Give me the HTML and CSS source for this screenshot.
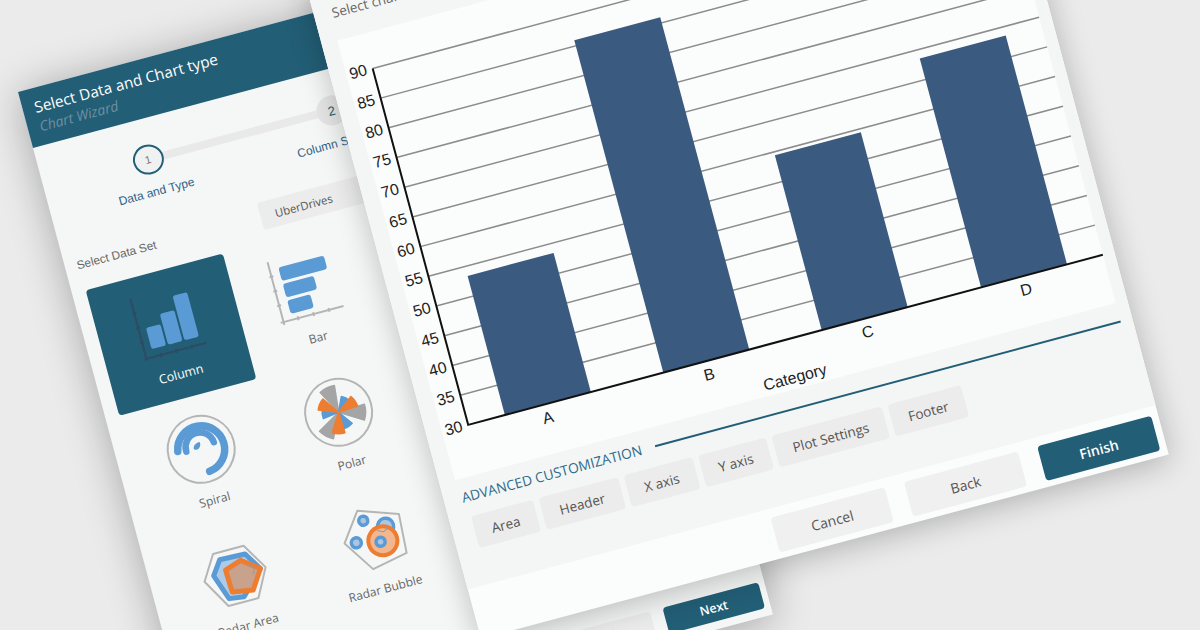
FILE: index.html
```html
<!DOCTYPE html>
<html lang="en">
<head>
<meta charset="utf-8">
<title>Chart Wizard</title>
<link rel="stylesheet" href="styles.css">
</head>
<body>
<main class="stage">

  <section class="window wizard">
    <header class="wizard-head">
      <h1 class="wizard-title">Select Data and Chart type</h1>
      <p class="wizard-sub">Chart Wizard</p>
    </header>

    <div class="stepper">
      <div class="step step-active">
        <span class="step-dot">1</span>
        <span class="step-label">Data and Type</span>
      </div>
      <div class="step">
        <span class="step-dot">2</span>
        <span class="step-label">Column Settings</span>
      </div>
    </div>

    <div class="form-row">
      <span class="form-label">Select Data Set</span>
      <div class="select">UberDrives</div>
    </div>

    <div class="type-grid">
      <div class="type-card type-selected">
        <svg class="type-icon" viewBox="0 0 142 95">
          <g class="axis-dark">
            <path d="M41 20V84M39 82H103M39 35h4M39 50h4M39 65h4M56 80v4M72 80v4M88 80v4"/>
          </g>
          <g class="fill-blue">
            <rect x="48.500" y="52" width="15" height="22" rx="2.5"/>
            <rect x="65.500" y="42" width="15" height="32" rx="2.5"/>
            <rect x="82.500" y="28" width="15" height="46" rx="2.5"/>
          </g>
        </svg>
        <span class="type-name">Column</span>
      </div>

      <div class="type-card">
        <svg class="type-icon" viewBox="0 0 142 95">
          <g class="axis-grey">
            <path d="M41 20V85M38 82H103M39 35h4M39 50h4M39 65h4M56 80v4M72 80v4M88 80v4"/>
          </g>
          <g class="fill-blue">
            <rect x="50" y="28" width="47" height="14" rx="3"/>
            <rect x="50" y="45" width="32" height="14" rx="3"/>
            <rect x="50" y="62" width="24" height="14" rx="3"/>
          </g>
        </svg>
        <span class="type-name">Bar</span>
      </div>

      <div class="type-card">
        <svg class="type-icon" viewBox="0 0 142 95">
          <circle class="ring" cx="70.5" cy="53.5" r="33.5"/>
          <g class="spiral">
            <path class="spiral-outer" d="M73 77A23.500 23.500 0 1 0 47.300 49.500"/>
            <path class="spiral-inner" d="M55.500 52A14.500 14.500 0 0 1 84.500 50"/>
          </g>
          <path class="fill-blue" d="M63.500 52C63 48 67 45.500 71 46C71.500 50.500 68 54 63.500 52Z"/>
        </svg>
        <span class="type-name">Spiral</span>
      </div>

      <div class="type-card">
        <svg class="type-icon" viewBox="0 0 142 95">
          <circle class="ring" cx="70.8" cy="53.3" r="33.5"/>
          <g transform="translate(70.8 53.3)">
            <g class="petal-grey">
              <path transform="rotate(-101)" d="M0 0L25.800 -7.900A27 27 0 0 1 25.800 7.900Z"/>
              <path transform="rotate(15)" d="M0 0L25.800 -7.900A27 27 0 0 1 25.800 7.900Z"/>
              <path transform="rotate(133)" d="M0 0L25.800 -7.900A27 27 0 0 1 25.800 7.900Z"/>
            </g>
            <g class="petal-blue">
              <path transform="rotate(-48)" d="M0 0L15.300 -4.700A16 16 0 0 1 15.300 4.700Z"/>
              <path transform="rotate(-171)" d="M0 0L15.800 -4.800A16.500 16.500 0 0 1 15.800 4.800Z"/>
              <path transform="rotate(71)" d="M0 0L16.700 -5.100A17.500 17.500 0 0 1 16.700 5.100Z"/>
            </g>
            <g class="petal-orange">
              <path transform="rotate(-20)" d="M0 0L19.100 -5.800A20 20 0 0 1 19.100 5.800Z"/>
              <path transform="rotate(-142)" d="M0 0L19.600 -6A20.500 20.500 0 0 1 19.600 6Z"/>
              <path transform="rotate(105)" d="M0 0L20.600 -6.300A21.500 21.500 0 0 1 20.600 6.300Z"/>
            </g>
          </g>
        </svg>
        <span class="type-name">Polar</span>
      </div>

      <div class="type-card">
        <svg class="type-icon" viewBox="0 0 142 95">
          <g transform="translate(70.8 55)">
            <path class="outline" d="M-16 -27.3H15.700L31.400 -1L16.500 27H-14.500L-31.400 -2.600Z"/>
            <path class="radar-blue" d="M-11 -20L15 -19L26 -1L3 22L-12 20L-21 -6Z"/>
            <path class="radar-orange" d="M9 -14L26 -1L13.400 18L-7.300 14.300L-8 -8.400Z"/>
            <path class="web" d="M15 -8L20 -3L18 3"/>
          </g>
        </svg>
        <span class="type-name">Radar Area</span>
      </div>

      <div class="type-card">
        <svg class="type-icon" viewBox="0 0 142 95">
          <g transform="translate(73.4 56.4)">
            <path class="outline" d="M-10.100 -33.100L29.300 -19.100L26.700 20.300L-9.800 27.400L-30.800 -4.800Z"/>
            <circle class="bubble" cx="-6.900" cy="-21.900" r="4.500"/>
            <circle class="bubble" cx="-19.300" cy="-2.400" r="5"/>
            <circle class="bubble" cx="13.300" cy="-10.900" r="8"/>
            <circle class="bubble-big" cx="6.900" cy="2.500" r="14.500"/>
            <circle class="bubble" cx="4.400" cy="2.900" r="4.500"/>
            <path class="web" d="M4 -9L10 -6L15 -9"/>
          </g>
        </svg>
        <span class="type-name">Radar Bubble</span>
      </div>
    </div>

    <footer class="wizard-foot">
      <button class="btn-small">Back</button>
      <button class="btn-small btn-small-primary">Next</button>
    </footer>
  </section>

  <section class="window editor">
    <div class="editor-main">
      <p class="editor-label">Select chart data</p>

      <div class="chart-panel">
        <svg class="chart" viewBox="0 0 684 455">
          <g class="grid">
            <path d="M27 36H684M27 66.750H684M27 97.500H684M27 128.250H684M27 159H684M27 189.750H684M27 220.500H684M27 251.250H684M27 282H684M27 312.750H684M27 343.500H684M27 374.250H684"/>
          </g>
          <g class="bars">
            <rect x="65" y="261" width="89" height="144"/>
            <rect x="229" y="61" width="89" height="344"/>
            <rect x="393" y="224" width="89" height="181"/>
            <rect x="558" y="168" width="89" height="237"/>
          </g>
          <path class="axes" d="M27 36V405H684"/>
          <g class="y-labels">
            <text x="21" y="41">90</text>
            <text x="21" y="72">85</text>
            <text x="21" y="102.500">80</text>
            <text x="21" y="133">75</text>
            <text x="21" y="164">70</text>
            <text x="21" y="195">65</text>
            <text x="21" y="225.500">60</text>
            <text x="21" y="256">55</text>
            <text x="21" y="287">50</text>
            <text x="21" y="318">45</text>
            <text x="21" y="348.500">40</text>
            <text x="21" y="379">35</text>
            <text x="21" y="410">30</text>
          </g>
          <g class="x-labels">
            <text x="106" y="424">A</text>
            <text x="273" y="424">B</text>
            <text x="437" y="424">C</text>
            <text x="601" y="424">D</text>
            <text x="355" y="449">Category</text>
          </g>
        </svg>
      </div>

      <div class="section-head">
        <span class="section-title">ADVANCED CUSTOMIZATION</span>
        <span class="section-rule"></span>
      </div>

      <div class="tabs">
        <button class="tab">Area</button>
        <button class="tab">Header</button>
        <button class="tab">X axis</button>
        <button class="tab">Y axis</button>
        <button class="tab">Plot Settings</button>
        <button class="tab">Footer</button>
      </div>
    </div>

    <footer class="editor-foot">
      <button class="btn">Cancel</button>
      <button class="btn">Back</button>
      <button class="btn btn-primary">Finish</button>
    </footer>
  </section>

</main>
</body>
</html>
```

FILE: styles.css
```css
* { box-sizing: border-box; }

html, body { margin: 0; padding: 0; }

body { background: #ebebeb; }

button { font: inherit; border: 0; padding: 0; }

.stage {
  position: relative;
  width: 1200px;
  height: 630px;
  overflow: hidden;
  background: #ebebeb;
  font-family: "Open Sans", "Noto Sans", sans-serif;
}

.window {
  position: absolute;
  display: flex;
  flex-direction: column;
  transform: rotate(-15deg);
  transform-origin: 0 0;
}

/* Back window: wizard */
.wizard {
  left: 18px;
  top: 92px;
  width: 594px;
  height: 700px;
  background: #f5f7f7;
  box-shadow: 0 4px 42px rgba(0, 0, 0, .3);
}

.wizard-head {
  height: 58px;
  padding: 7px 0 0 12px;
  background: #225e76;
}

.wizard-title {
  margin: 0;
  font-size: 15.3px;
  font-weight: 400;
  line-height: 24px;
  color: #fff;
}

.wizard-sub {
  margin: 0;
  font-size: 14px;
  font-style: italic;
  line-height: 16px;
  color: #6f90a2;
}

.stepper {
  display: flex;
  padding: 26px 0 0 13px;
}

.step {
  position: relative;
  display: flex;
  flex-direction: column;
  align-items: center;
  width: 190px;
}

.step-active::after {
  content: "";
  position: absolute;
  top: 11px;
  left: 110px;
  width: 170px;
  height: 8px;
  background: #e9e9e9;
}

.step-dot {
  position: relative;
  z-index: 1;
  display: flex;
  align-items: center;
  justify-content: center;
  width: 31px;
  height: 30px;
  border-radius: 50%;
  background: #e6e6e6;
  font-family: "Liberation Sans", Arial, sans-serif;
  font-size: 13px;
  color: #225e76;
}

.step-active .step-dot {
  border: 2px solid #225e76;
  background: #f0f1f1;
  font-size: 11px;
  color: #777;
}

.step-label {
  margin-top: 11px;
  font-family: "Liberation Sans", Arial, sans-serif;
  font-size: 12px;
  line-height: 15px;
  color: #2d6185;
  white-space: nowrap;
}

.form-row {
  display: grid;
  grid-template-columns: 190px 230px;
  align-items: center;
  margin-top: 29px;
  padding-left: 12px;
}

.form-label {
  font-family: "Liberation Sans", Arial, sans-serif;
  font-size: 11.8px;
  line-height: 15px;
  color: #666;
}

.select {
  display: flex;
  align-items: center;
  height: 28px;
  padding-left: 15px;
  border-radius: 3px;
  background: #ececec;
  font-size: 11.3px;
  color: #555;
}

.type-grid {
  display: grid;
  grid-template-columns: 142px 142px;
  grid-auto-rows: 130px;
  margin-top: 12px;
  padding-left: 13.5px;
}

.type-card {
  display: flex;
  flex-direction: column;
  align-items: center;
  border-radius: 4px;
}

.type-selected { background: #225e76; }

.type-icon {
  display: block;
  flex: none;
  width: 142px;
  height: 95px;
}

.type-name {
  margin-top: 2px;
  font-size: 12px;
  line-height: 18px;
  color: #666;
}

.type-selected .type-name {
  font-size: 12.5px;
  color: #fff;
}

.axis-dark path {
  fill: none;
  stroke: #2f4b63;
  stroke-width: 2;
}

.axis-grey path {
  fill: none;
  stroke: #b5b5b5;
  stroke-width: 2;
}

.fill-blue { fill: #5b9bd5; }

.ring {
  fill: none;
  stroke: #b5b5b5;
  stroke-width: 2;
}

.spiral path {
  fill: none;
  stroke: #5b9bd5;
  stroke-linecap: round;
}

.spiral-outer { stroke-width: 7.5; }

.spiral-inner { stroke-width: 6.5; }

.petal-grey path {
  fill: #a5a5a5;
  stroke: #a5a5a5;
  stroke-width: 1.5;
  stroke-linejoin: round;
}

.petal-blue path {
  fill: #5b9bd5;
  stroke: #5b9bd5;
  stroke-width: 1.5;
  stroke-linejoin: round;
}

.petal-orange path {
  fill: #ed7d31;
  stroke: #ed7d31;
  stroke-width: 1.5;
  stroke-linejoin: round;
}

.outline {
  fill: none;
  stroke: #b5b5b5;
  stroke-width: 2;
  stroke-linejoin: round;
}

.radar-blue {
  fill: #adcbe9;
  stroke: #5b9bd5;
  stroke-width: 5;
  stroke-linejoin: round;
}

.radar-orange {
  fill: #c9a28d;
  stroke: #ed7d31;
  stroke-width: 5;
  stroke-linejoin: round;
}

.web {
  fill: none;
  stroke: #999;
  stroke-width: 1;
}

.bubble {
  fill: #adc6e0;
  stroke: #5b9bd5;
  stroke-width: 3.5;
}

.bubble-big {
  fill: #f2b78f;
  stroke: #ed7d31;
  stroke-width: 4;
}

.wizard-foot {
  display: flex;
  justify-content: flex-end;
  gap: 13px;
  margin-top: auto;
  padding: 0 6px 8px 0;
}

.btn-small {
  width: 99px;
  height: 27px;
  border-radius: 4px;
  background: #ececec;
  font-size: 12.5px;
  color: #555;
}

.btn-small-primary {
  background: #225e76;
  font-weight: 600;
  color: #fff;
}

/* Front window: editor */
.editor {
  left: 305px;
  top: -18px;
  width: 712px;
  height: 680px;
  background: #fbfcfc;
  box-shadow: 0 6px 30px rgba(0, 0, 0, .24);
}

.editor-main {
  display: flex;
  flex: 1;
  flex-direction: column;
  background: #f4f6f6;
}

.editor-label {
  height: 65px;
  margin: 0;
  padding: 28px 0 0 18px;
  font-size: 13.5px;
  line-height: 18px;
  color: #666;
}

.chart-panel {
  width: 684px;
  height: 455px;
  margin-left: 16px;
  background: #fbfcfc;
}

.chart {
  display: block;
  width: 684px;
  height: 455px;
  overflow: visible;
}

.grid path {
  fill: none;
  stroke: #8c8c8c;
  stroke-width: 1.5;
}

.bars { fill: #3a5a7f; }

.axes {
  fill: none;
  stroke: #111;
  stroke-width: 2;
}

.y-labels text,
.x-labels text {
  font-family: "Liberation Sans", Arial, sans-serif;
  font-size: 16px;
  fill: #222;
}

.y-labels text { text-anchor: end; }

.x-labels text { text-anchor: middle; }

.section-head {
  display: flex;
  align-items: center;
  gap: 14px;
  height: 18px;
  margin: 10px 12px 0 18px;
}

.section-title {
  font-size: 13.8px;
  line-height: 18px;
  color: #2f6b8a;
  white-space: nowrap;
}

.section-rule {
  flex: 1;
  height: 1.2px;
  background: #225e76;
}

.tabs {
  display: flex;
  gap: 6px;
  margin-top: 11px;
  padding-left: 21.5px;
}

.tab {
  height: 33px;
  padding: 0 17.5px;
  border-radius: 4px;
  background: #ececec;
  font-size: 13.6px;
  color: #555;
}

.editor-foot {
  display: flex;
  flex: none;
  align-items: flex-end;
  justify-content: flex-end;
  gap: 20px;
  height: 51px;
  padding: 0 7px 6px 0;
}

.btn {
  width: 118px;
  height: 36px;
  border-radius: 4px;
  background: #f0f0f0;
  font-size: 14px;
  color: #555;
}

.btn-primary {
  background: #225e76;
  font-weight: 600;
  color: #fff;
}
```
